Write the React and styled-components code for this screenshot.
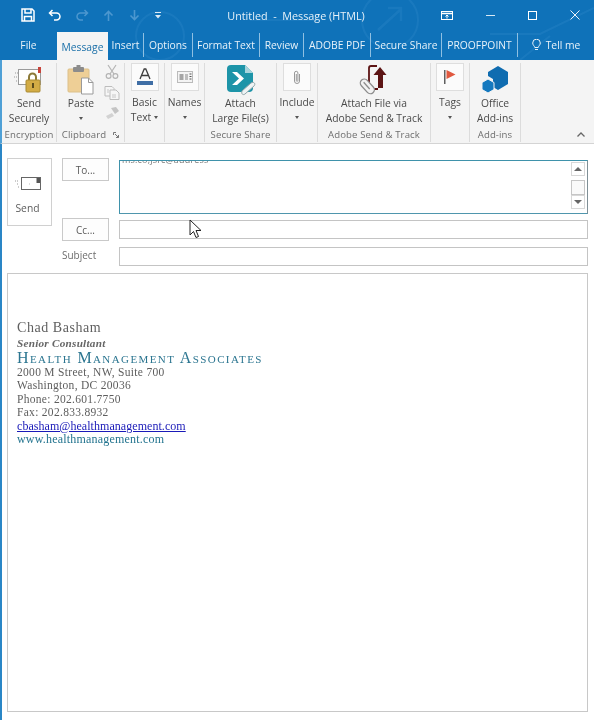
import React from "react";
import styled, { createGlobalStyle } from "styled-components";

const Global = createGlobalStyle`
  html, body { margin: 0; padding: 0; background: #fff; }
  body { font-family: "Open Sans", "Liberation Sans", sans-serif; }
`;

const Page = styled.div`
  position: relative;
  width: 594px;
  height: 720px;
  overflow: hidden;
  background: #fff;
  display: flex;
  flex-direction: column;
  filter: blur(0.35px);
`;

const Header = styled.header`
  position: relative;
  height: 60px;
  background: #0f72b9;
  flex: none;
`;

const Watermark = styled.svg`
  position: absolute;
  inset: 0;
  width: 594px;
  height: 60px;
`;

const TitleBar = styled.div`
  position: relative;
  height: 30px;
  display: flex;
  align-items: center;
  padding-left: 21px;
  color: #fff;
`;

const QuickIcons = styled.div`
  display: flex;
  align-items: center;
  gap: 13px;
  width: 189px;
  flex: none;
`;

const Title = styled.div`
  width: 172px;
  flex: none;
  text-align: center;
  font-size: 10.8px;
  color: #e6f1f9;
  white-space: pre;
`;

const WindowIcons = styled.div`
  display: flex;
  align-items: center;
  margin-left: 59px;
  gap: 33px;
`;

const TabBar = styled.nav`
  position: relative;
  height: 30px;
  display: flex;
  align-items: flex-end;
`;

const Tab = styled.div`
  width: ${(p) => p.$w}px;
  flex: none;
  height: ${(p) => (p.$active ? 28 : 24)}px;
  margin-bottom: ${(p) => (p.$active ? 0 : 3)}px;
  display: flex;
  align-items: center;
  justify-content: center;
  gap: 5px;
  font-size: 10.3px;
  white-space: nowrap;
  color: ${(p) => (p.$active ? "#1a6fa8" : "#e8f2f9")};
  background: ${(p) => (p.$active ? "#f4f4f4" : "transparent")};
  border-right: ${(p) => (p.$sep ? "1px solid #8fc0e2" : "none")};
  box-sizing: border-box;
  padding-top: ${(p) => (p.$active ? 2 : 0)}px;
`;

const Ribbon = styled.section`
  flex: none;
  height: 84px;
  display: flex;
  background: #f4f4f4;
  border-bottom: 1px solid #d4d4d4;
  border-left: 2px solid #4fa0d6;
  box-sizing: border-box;
`;

const Group = styled.div`
  width: ${(p) => p.$w}px;
  flex: none;
  box-sizing: border-box;
  border-right: 1px solid #dcdcdc;
  margin: 3px 0 1px;
  display: flex;
  flex-direction: column;
  align-items: center;
`;

const GroupBody = styled.div`
  flex: 1;
  display: flex;
  gap: 3px;
`;

const GroupLabel = styled.div`
  height: 14px;
  display: flex;
  align-items: center;
  gap: 7px;
  font-size: 9.6px;
  line-height: 14px;
  color: #6e6e6e;
  white-space: nowrap;
  letter-spacing: 0.1px;
`;

const Launcher = styled.svg`
  width: 6px;
  height: 6px;
`;

const BigButton = styled.div`
  display: flex;
  flex-direction: column;
  align-items: center;
  text-align: center;
  width: ${(p) => p.$w || 50}px;
  font-size: 10.3px;
  line-height: 15px;
  color: #4a4a4a;
  white-space: nowrap;
`;

const IconSlot = styled.div`
  height: 33px;
  display: flex;
  align-items: center;
  justify-content: center;
`;

const BoxIcon = styled.div`
  width: 26px;
  height: 26px;
  margin-bottom: 4px;
  background: #fbfbfb;
  border: 1px solid #dedede;
  display: flex;
  align-items: center;
  justify-content: center;
`;

const Caret = styled.span`
  display: inline-block;
  width: 0;
  height: 0;
  border-left: 2.5px solid transparent;
  border-right: 2.5px solid transparent;
  border-top: 3px solid #555;
  margin: ${(p) => (p.$inline ? "0 0 2px 3px" : "6px 0 0")};
  vertical-align: middle;
`;

const SmallTools = styled.div`
  display: flex;
  flex-direction: column;
  align-items: center;
  gap: 7px;
  padding-top: 1px;
`;

const Collapse = styled.div`
  flex: 1;
  align-self: stretch;
  display: flex;
  align-items: flex-end;
  justify-content: flex-end;
  padding: 0 9px 6px 0;
`;

const Compose = styled.main`
  flex: 1;
  min-height: 0;
  display: flex;
  flex-direction: column;
  border-left: 2px solid #2a86c6;
  padding: 14px 6px 8px 5px;
`;

const Fields = styled.div`
  display: flex;
  gap: 10px;
`;

const SendButton = styled.div`
  width: 45px;
  height: 68px;
  flex: none;
  box-sizing: border-box;
  border: 1px solid #d0d0d0;
  display: flex;
  flex-direction: column;
  align-items: center;
  font-size: 10.3px;
  color: #5c5c5c;
  padding: 18px 4px 0 0;
  gap: 10px;
`;

const Rows = styled.div`
  flex: 1;
  display: grid;
  grid-template-columns: 47px 1fr;
  column-gap: 10px;
  grid-template-rows: 60px 29px 19px;
  align-items: start;
`;

const AddressButton = styled.div`
  height: 23px;
  box-sizing: border-box;
  border: 1px solid #c9c9c9;
  background: #fdfdfd;
  display: flex;
  align-items: center;
  justify-content: center;
  font-size: 10px;
  color: #5a5a5a;
`;

const SubjectLabel = styled.div`
  height: 19px;
  line-height: 17px;
  font-size: 10px;
  color: #6d6d6d;
`;

const ToField = styled.div`
  height: 54px;
  margin-top: 2px;
  box-sizing: border-box;
  border: 1px solid #3f92ab;
  border-right-color: #7f8f96;
  border-bottom-color: #4f96ad;
  display: flex;
  justify-content: space-between;
  padding-right: 2px;
  overflow: hidden;
`;

const ToText = styled.div`
  font-size: 9px;
  line-height: 12px;
  height: 12px;
  margin: -7px 0 0 2px;
  color: #777;
  letter-spacing: 0.2px;
`;

const Scroll = styled.div`
  width: 14px;
  display: flex;
  flex-direction: column;
  padding-top: 1px;
`;

const ScrollBtn = styled.div`
  height: 14px;
  box-sizing: border-box;
  border: 1px solid #d8d8d8;
  display: flex;
  align-items: center;
  justify-content: center;
`;

const ScrollGap = styled.div`
  height: 4px;
`;

const Thumb = styled.div`
  height: 15px;
  box-sizing: border-box;
  border: 1px solid #c6c6c6;
  background: #fafafa;
`;

const Arrow = styled.span`
  width: 0;
  height: 0;
  border-left: 4px solid transparent;
  border-right: 4px solid transparent;
  ${(p) => (p.$up ? "border-bottom: 4px solid #666;" : "border-top: 4px solid #666;")}
`;

const TextField = styled.div`
  height: 19px;
  margin-top: ${(p) => p.$top || 0}px;
  box-sizing: border-box;
  border: 1px solid #c4c4c4;
`;

const Body = styled.div`
  flex: 1;
  margin-top: 7px;
  box-sizing: border-box;
  border: 1px solid #c8c8c8;
  padding: 47px 0 0 9px;
  font-family: "Liberation Serif", "DejaVu Serif", serif;
  color: #555;
`;

const SigName = styled.div`
  font-size: 14px;
  line-height: 14px;
  letter-spacing: 0.55px;
  color: #5f5f5f;
`;

const SigRole = styled.div`
  font-size: 11.2px;
  font-style: italic;
  font-weight: bold;
  line-height: 14px;
  margin-top: 1px;
  letter-spacing: 0.25px;
  color: #666;
`;

const SigCompany = styled.div`
  font-size: 16px;
  line-height: 16px;
  font-variant: small-caps;
  letter-spacing: 1.4px;
  color: #2b7590;
`;

const SigLine = styled.div`
  font-size: 11.5px;
  line-height: 13.4px;
  letter-spacing: 0.3px;
  color: #5d5d5d;
`;

const SigEmail = styled.div`
  font-size: 12px;
  line-height: 13.5px;
  letter-spacing: 0.05px;
  color: #1a1ab8;
  text-decoration: underline;
`;

const SigWeb = styled.div`
  font-size: 12px;
  line-height: 13.5px;
  letter-spacing: 0.2px;
  color: #23748f;
`;

const Cursor = styled.svg`
  position: absolute;
  left: 189px;
  top: 219px;
  width: 13px;
  height: 20px;
`;

const SaveIcon = () => (
  <svg width="14" height="14" viewBox="0 0 14 14" fill="none" stroke="#fff" strokeWidth="1.5">
    <path d="M1 1h10l2 2v10H1z" />
    <path d="M4 1v4h6V1M3.5 13V8.5h7V13" />
  </svg>
);
const Undo = ({ c = "#fff" }) => (
  <svg width="14" height="13" viewBox="0 0 14 13" fill="none" stroke={c} strokeWidth="1.5">
    <path d="M4.5 1L1.5 4l3 3M2 4h6.5a3.500 3.500 0 0 1 0 7H6" />
  </svg>
);
const Redo = () => (
  <svg width="14" height="13" viewBox="0 0 14 13" fill="none" stroke="#4c97cf" strokeWidth="1.5">
    <path d="M9.5 1l3 3-3 3M12 4H5.5a3.500 3.500 0 0 0 0 7H8" />
  </svg>
);
const UpA = ({ flip }) => (
  <svg width="13" height="11" viewBox="0 0 11 11" fill="none" stroke="#4c97cf" strokeWidth="1.6" style={flip ? { transform: "scaleY(-1)" } : undefined}>
    <path d="M1.5 5.5l4-4 4 4M5.5 2v9" />
  </svg>
);
const More = () => (
  <svg width="8" height="8" viewBox="0 0 8 8" fill="#dcebf6">
    <rect x="1" y="1" width="6" height="1" />
    <path d="M1 4h6L4 7.5z" />
  </svg>
);
const RestoreIcon = () => (
  <svg width="12" height="9" viewBox="0 0 12 9" fill="none" stroke="#fff">
    <rect x=".5" y=".5" width="11" height="8" />
    <path d="M.5 2.5h11" strokeWidth="1.5" />
    <path d="M6 7.5V4M4.500 5.500L6 4l1.500 1.500" />
  </svg>
);
const MinIcon = () => (
  <svg width="9" height="9" viewBox="0 0 9 9" stroke="#d8e9f5"><path d="M0 4.5h9" /></svg>
);
const MaxIcon = () => (
  <svg width="9" height="9" viewBox="0 0 9 9" fill="none" stroke="#fff"><rect x=".5" y=".5" width="8" height="8" /></svg>
);
const CloseIcon = () => (
  <svg width="10" height="10" viewBox="0 0 10 10" stroke="#eaf3fa"><path d="M.5.5l9 9M9.5.5l-9 9" /></svg>
);
const Bulb = () => (
  <svg width="9" height="12" viewBox="0 0 9 12" fill="none" stroke="#e8f2f9">
    <path d="M2.800 8.500C2.500 7 .7 6 .7 4a3.800 3.800 0 0 1 7.600 0c0 2-1.800 3-2.100 4.500zM3 10.500h3" />
  </svg>
);

const Lock = () => (
  <svg width="30" height="28" viewBox="0 0 30 28">
    <path d="M1 7h3M0 11h4M2 15h3" stroke="#999" strokeDasharray="1 1" />
    <rect x="4.500" y="3.500" width="22" height="15" fill="#fff" stroke="#9a9a9a" />
    <rect x="24" y="1" width="3" height="6" fill="#c8443a" />
    <path d="M15 14v-3a3.500 3.500 0 0 1 7 0v3" fill="none" stroke="#8c7a3a" strokeWidth="2" />
    <rect x="12" y="14" width="14" height="12" rx="1" fill="#d3ac45" stroke="#a98a32" />
    <rect x="18" y="17" width="2" height="5" fill="#5c4c1c" />
  </svg>
);
const PasteIcon = () => (
  <svg width="28" height="30" viewBox="0 0 28 30">
    <rect x="1" y="4" width="21" height="23" rx="1" fill="#eecf96" stroke="#dcc08a" />
    <rect x="6" y="2" width="11" height="5" rx="1" fill="#8c8c8c" />
    <rect x="9.500" y="0" width="4" height="3" fill="#8c8c8c" />
    <path d="M14.500 13h7l4.500 4.500V29H14.500z" fill="#fff" stroke="#9a9a9a" />
    <path d="M21.500 13v4.500H26" fill="none" stroke="#9a9a9a" />
  </svg>
);
const Scissors = () => (
  <svg width="14" height="15" viewBox="0 0 14 15" fill="none" stroke="#b4b4b4" strokeWidth="1.2">
    <path d="M3 1l6 9M11 1l-6 9" />
    <circle cx="3.600" cy="12" r="2.400" />
    <circle cx="10.400" cy="12" r="2.400" />
  </svg>
);
const CopyIcon = () => (
  <svg width="16" height="14" viewBox="0 0 16 14" fill="#f6f6f6" stroke="#bdbdbd">
    <path d="M1 .5h7l2 2V10H1z" />
    <path d="M6 4h6l3 3v6.500H6z" />
    <path d="M3 4h2M3 6h2M8 9h4M8 11h4" strokeWidth=".8" />
  </svg>
);
const Painter = () => (
  <svg width="14" height="12" viewBox="0 0 14 12">
    <path d="M6 1l5-1 3 4-4 3z" fill="#c4c4c4" />
    <path d="M7 6L1 9l2 3 6-3z" fill="#d2d2d2" />
  </svg>
);
const TextA = () => (
  <svg width="16" height="18" viewBox="0 0 16 18">
    <path d="M3 11L7.200 1h1.600L13 11M4.800 7.500h6.400" fill="none" stroke="#3f3f3f" strokeWidth="1.300" />
    <rect x="0" y="13" width="16" height="4" fill="#3f6ea5" />
  </svg>
);
const NamesIcon = () => (
  <svg width="16" height="12" viewBox="0 0 16 12">
    <rect x=".5" y=".5" width="15" height="11" fill="#f4f4f4" stroke="#bbb" />
    <rect x="2.500" y="3" width="4" height="6" fill="#a5a5a5" />
    <rect x="8" y="3" width="3" height="6" fill="#bdbdbd" />
    <path d="M12.500 3h2M12.500 5.500h2M12.500 8h2" stroke="#555" />
  </svg>
);
const AttachLarge = () => (
  <svg width="30" height="32" viewBox="0 0 30 32">
    <path d="M5 1h14l8 8v15a4 4 0 0 1-4 4H5a4 4 0 0 1-4-4V5a4 4 0 0 1 4-4z" fill="#1d94a8" />
    <path d="M19 1l8 8h-8z" fill="#a7d4dc" />
    <path d="M6 8h5l7 6.500-7 6.500H6l7-6.500z" fill="#fff" />
    <path d="M16 27l9-8c3-2 5 1 3 3l-9 8c-2 1.500-4 0-3-3z" fill="#eef3f4" stroke="#90a5aa" />
  </svg>
);
const Paperclip = ({ c = "#999", w = 10, h = 15 }) => (
  <svg width={w} height={h} viewBox="0 0 10 15" fill="none" stroke={c} strokeWidth="1">
    <path d="M7.500 4v7a2.500 2.500 0 0 1-5 0V3a1.700 1.700 0 0 1 3.400 0v7.500a.8.8 0 0 1-1.600 0V4" />
  </svg>
);
const AdobeSend = () => (
  <svg width="30" height="32" viewBox="0 0 30 32">
    <path d="M18 2h-6a2 2 0 0 0-2 2v18a3 3 0 0 0 3 3h6" fill="none" stroke="#5c1414" strokeWidth="1.800" />
    <path d="M21 3l6.500 8H24v13h-5V11h-4.500z" fill="#5c1414" />
    <g transform="rotate(-42 8 22)" fill="none" stroke="#8c8c8c" strokeWidth="1.300">
      <rect x="4" y="14" width="8" height="17" rx="4" fill="#f2f2f2" />
      <path d="M8 17v9" />
    </g>
  </svg>
);
const Flag = () => (
  <svg width="12" height="14" viewBox="0 0 12 14">
    <rect x="0" y="0" width="1.500" height="14" fill="#5f5f5f" />
    <path d="M2.500 0l9 4.500-9 4.500z" fill="#e0583f" />
  </svg>
);
const OfficeAdd = () => (
  <svg width="26" height="28" viewBox="0 0 26 28">
    <path d="M16 0l10 6v12l-10 6-5-3v-8l-5-3V6z" fill="#0f6cb0" />
    <path d="M6 13l6 3.500v7L6 27l-6-3.500v-7z" fill="#1579bf" stroke="#f4f4f4" strokeWidth="1" />
  </svg>
);
const SendIcon = () => (
  <svg width="26" height="14" viewBox="0 0 26 14" fill="none">
    <path d="M0 4h3M2 7h2M3 10h2" stroke="#999" strokeDasharray="1 1" />
    <rect x="6.500" y=".5" width="19" height="12" fill="#fff" stroke="#666" />
    <rect x="21.500" y="1" width="3.500" height="5" fill="#555" />
    <path d="M14 7h1" stroke="#bbb" />
  </svg>
);

const tabs = [
  ["File", 57, false, false],
  ["Message", 51, true, false],
  ["Insert", 36, false, true],
  ["Options", 49, false, true],
  ["Format Text", 67, false, true],
  ["Review", 44, false, true],
  ["ADOBE PDF", 67, false, true],
  ["Secure Share", 71, false, true],
  ["PROOFPOINT", 76, false, true],
];

export default function App() {
  return (
    <Page>
      <Global />
      <Header>
        <Watermark viewBox="0 0 594 60" fill="none" stroke="#2380c2" strokeOpacity=".55">
          <circle cx="390" cy="20" r="28" strokeWidth="2" />
          <path d="M378 30l22-20M388 8h13v13" strokeWidth="2.500" />
          <circle cx="160" cy="36" r="24" strokeWidth="2" />
          <path d="M490 34l50 0 54-26M250 20h70M520 60l30-24" strokeWidth="2" />
        </Watermark>
        <TitleBar>
          <QuickIcons>
            <SaveIcon />
            <Undo />
            <Redo />
            <UpA />
            <UpA flip />
            <More />
          </QuickIcons>
          <Title>{"Untitled  -  Message (HTML)"}</Title>
          <WindowIcons>
            <RestoreIcon />
            <MinIcon />
            <MaxIcon />
            <CloseIcon />
          </WindowIcons>
        </TitleBar>
        <TabBar>
          {tabs.map(([t, w, a, s]) => (
            <Tab key={t} $w={w} $active={a} $sep={s}>{t}</Tab>
          ))}
          <Tab $w={76}><Bulb />Tell me</Tab>
        </TabBar>
      </Header>
      <Ribbon>
        <Group $w={55}>
          <GroupBody>
            <BigButton $w={50}>
              <IconSlot><Lock /></IconSlot>
              Send
              <br />
              Securely
            </BigButton>
          </GroupBody>
          <GroupLabel>Encryption</GroupLabel>
        </Group>
        <Group $w={68}>
          <GroupBody>
            <BigButton $w={40}>
              <IconSlot><PasteIcon /></IconSlot>
              Paste
              <Caret />
            </BigButton>
            <SmallTools>
              <Scissors />
              <CopyIcon />
              <Painter />
            </SmallTools>
          </GroupBody>
          <GroupLabel>
            Clipboard
            <Launcher viewBox="0 0 6 6" fill="none" stroke="#777"><path d="M.5 3V.5H3M2 2l3.500 3.500M3 5.500h2.500V3" /></Launcher>
          </GroupLabel>
        </Group>
        <Group $w={40}>
          <GroupBody>
            <BigButton $w={38}>
              <BoxIcon><TextA /></BoxIcon>
              Basic
              <span>Text<Caret $inline /></span>
            </BigButton>
          </GroupBody>
          <GroupLabel>&nbsp;</GroupLabel>
        </Group>
        <Group $w={40}>
          <GroupBody>
            <BigButton $w={38}>
              <BoxIcon><NamesIcon /></BoxIcon>
              Names
              <Caret />
            </BigButton>
          </GroupBody>
          <GroupLabel>&nbsp;</GroupLabel>
        </Group>
        <Group $w={72}>
          <GroupBody>
            <BigButton $w={66}>
              <IconSlot><AttachLarge /></IconSlot>
              Attach
              <br />
              Large File(s)
            </BigButton>
          </GroupBody>
          <GroupLabel>Secure Share</GroupLabel>
        </Group>
        <Group $w={41}>
          <GroupBody>
            <BigButton $w={40}>
              <BoxIcon><Paperclip /></BoxIcon>
              Include
              <Caret />
            </BigButton>
          </GroupBody>
          <GroupLabel>&nbsp;</GroupLabel>
        </Group>
        <Group $w={113}>
          <GroupBody>
            <BigButton $w={108}>
              <IconSlot><AdobeSend /></IconSlot>
              Attach File via
              <br />
              Adobe Send &amp; Track
            </BigButton>
          </GroupBody>
          <GroupLabel>Adobe Send &amp; Track</GroupLabel>
        </Group>
        <Group $w={39}>
          <GroupBody>
            <BigButton $w={36}>
              <BoxIcon><Flag /></BoxIcon>
              Tags
              <Caret />
            </BigButton>
          </GroupBody>
          <GroupLabel>&nbsp;</GroupLabel>
        </Group>
        <Group $w={51}>
          <GroupBody>
            <BigButton $w={48}>
              <IconSlot><OfficeAdd /></IconSlot>
              Office
              <br />
              Add-ins
            </BigButton>
          </GroupBody>
          <GroupLabel>Add-ins</GroupLabel>
        </Group>
        <Collapse>
          <svg width="8" height="5" viewBox="0 0 8 5" fill="none" stroke="#666" strokeWidth="1.300"><path d="M.5 4.500L4 1l3.500 3.500" /></svg>
        </Collapse>
      </Ribbon>
      <Compose>
        <Fields>
          <SendButton>
            <SendIcon />
            Send
          </SendButton>
          <Rows>
            <AddressButton>To...</AddressButton>
            <ToField>
              <ToText>ms.co,jsrc@address</ToText>
              <Scroll>
                <ScrollBtn><Arrow $up /></ScrollBtn>
                <ScrollGap />
                <Thumb />
                <ScrollBtn><Arrow /></ScrollBtn>
              </Scroll>
            </ToField>
            <AddressButton>Cc...</AddressButton>
            <TextField $top={2} />
            <SubjectLabel>Subject</SubjectLabel>
            <TextField />
          </Rows>
        </Fields>
        <Body>
          <SigName>Chad Basham</SigName>
          <SigRole>Senior Consultant</SigRole>
          <SigCompany>Health Management Associates</SigCompany>
          <SigLine>2000 M Street, NW, Suite 700</SigLine>
          <SigLine>Washington, DC 20036</SigLine>
          <SigLine>Phone: 202.601.7750</SigLine>
          <SigLine>Fax: 202.833.8932</SigLine>
          <SigEmail>cbasham@healthmanagement.com</SigEmail>
          <SigWeb>www.healthmanagement.com</SigWeb>
        </Body>
      </Compose>
      <Cursor viewBox="0 0 13 20">
        <path d="M1 1v15l3.500-3.500 2.500 6 2.500-1-2.500-6h5z" fill="#fff" stroke="#222" strokeWidth="1" />
      </Cursor>
    </Page>
  );
}
